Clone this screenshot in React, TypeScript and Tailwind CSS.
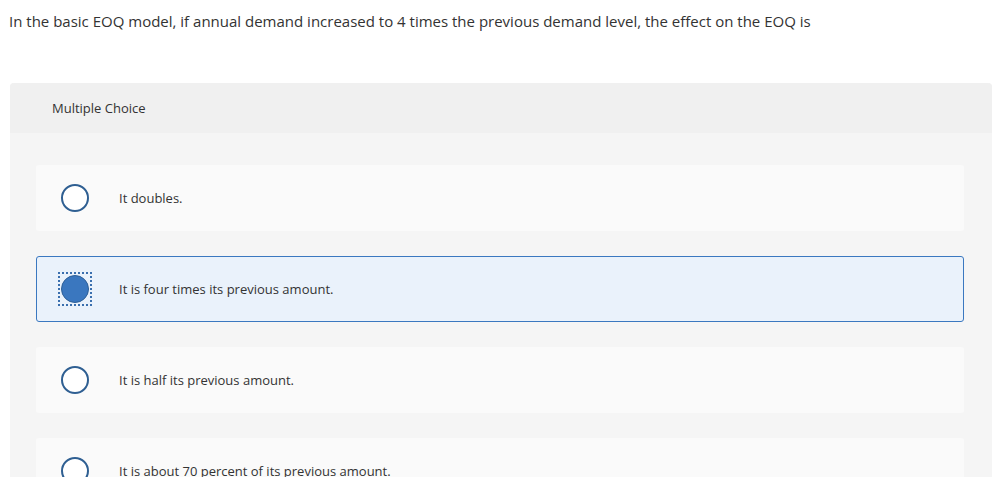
import React from "react";

const options = [
  "It doubles.",
  "It is four times its previous amount.",
  "It is half its previous amount.",
  "It is about 70 percent of its previous amount.",
];

export default function App() {
  const selected = 1;
  return (
    <div
      className="w-[995px] h-[494px] bg-white text-[#333] overflow-hidden"
      style={{ fontFamily: "'Open Sans', Lato, sans-serif" }}
    >
      <div className="pl-[9px] pt-[11px] text-[15px] leading-[20px] text-[#333]">
        In the basic EOQ model, if annual demand increased to 4 times the previous demand level, the effect on the EOQ is
      </div>
      <div className="mt-[52px] ml-[10px] w-[982px] h-[394px] rounded-t-[4px] overflow-hidden bg-[#f5f5f5]">
        <div className="h-[50px] bg-[#f0f0f0] flex items-center pl-[42px] pt-[1px] text-[13px] text-[#333]">
          Multiple Choice
        </div>
        <div className="pt-[32px] pl-[26px] flex flex-col gap-[25px]">
          {options.map((o, i) => {
            const sel = i === selected;
            return (
              <div
                key={i}
                className={
                  sel
                    ? "w-[928px] h-[66px] shrink-0 rounded-[3px] border border-[#3b78c0] bg-[#eaf2fb] flex items-center"
                    : "w-[928px] h-[66px] shrink-0 rounded-[3px] border border-transparent bg-[#fafafa] flex items-center"
                }
              >
                <div className="ml-[21px] w-[34px] h-[34px] flex items-center justify-center">
                  {sel ? (
                    <div className="w-[34px] h-[34px] border-2 border-dotted border-[#3a6fae] flex items-center justify-center">
                      <div className="w-[28px] h-[28px] rounded-full bg-[#3a77bf] border border-[#2d5f97]" />
                    </div>
                  ) : (
                    <div className="w-[28px] h-[28px] rounded-full bg-white border-2 border-[#2f5f92]" />
                  )}
                </div>
                <div className="ml-[27px] pt-[1px] text-[13px] text-[#333]">{o}</div>
              </div>
            );
          })}
        </div>
      </div>
    </div>
  );
}
